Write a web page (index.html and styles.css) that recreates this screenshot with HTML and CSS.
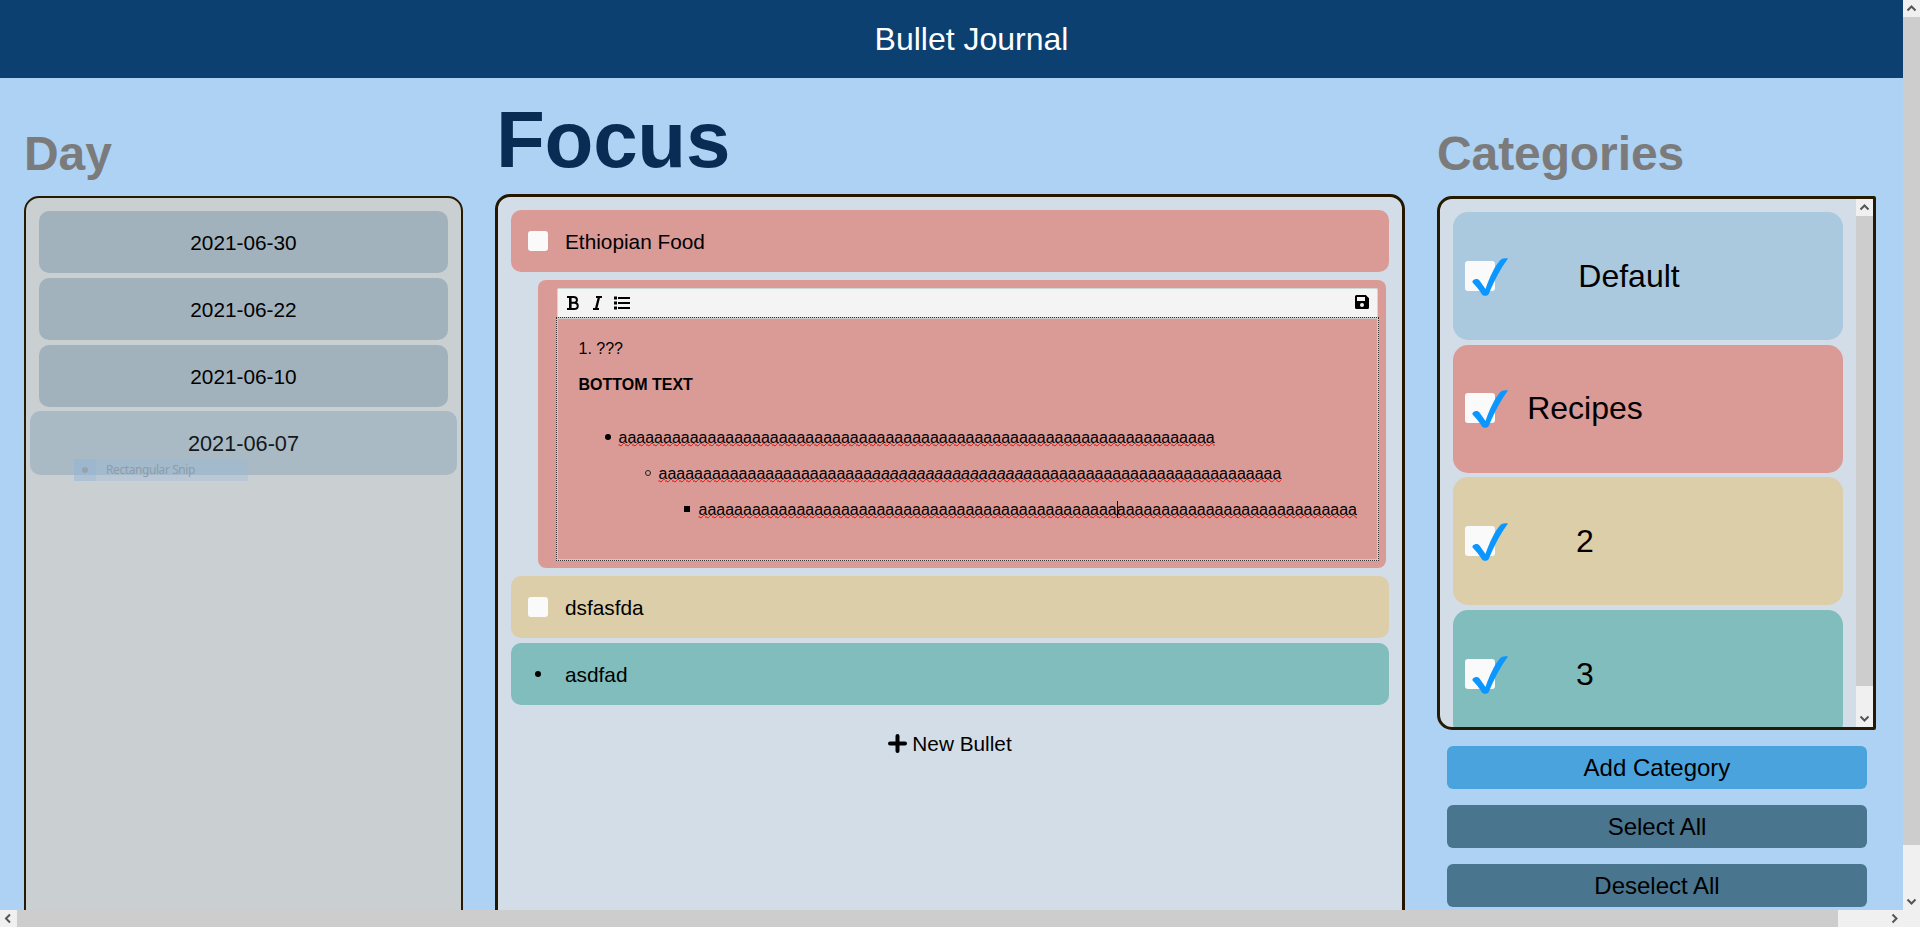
FILE: index.html
```html
<!DOCTYPE html>
<html lang="en">
<head>
<meta charset="utf-8">
<title>Bullet Journal</title>
<link rel="stylesheet" href="styles.css">
</head>
<body>
<div class="window">
  <div class="page">
    <header class="header">Bullet Journal</header>
    <main class="columns">
      <section class="day">
        <h1 class="title">Day</h1>
        <div class="day-panel">
          <div class="date">2021-06-30</div>
          <div class="date">2021-06-22</div>
          <div class="date">2021-06-10</div>
          <div class="date active">2021-06-07</div>
          <div class="snip"><span class="snip-icon"><i></i></span><span class="snip-text">Rectangular Snip</span></div>
        </div>
      </section>
      <section class="focus">
        <h1 class="title focus-title">Focus</h1>
        <div class="focus-panel">
          <div class="bullet red"><span class="mark"><i class="box"></i></span>Ethiopian Food</div>
          <div class="note red">
            <div class="toolbar">
              <svg class="tool-b" width="12" height="14" viewBox="0 0 12 14"><path fill="none" stroke="#000" stroke-width="2" d="M0 1h6.500c4.600 0 4.600 5.800 0 5.800H3.500h3.500c5 0 5 6.200 0 6.200H0"/><path stroke="#000" stroke-width="2.600" d="M3.300 1v12"/></svg>
              <svg class="tool-i" width="9" height="14" viewBox="0 0 9 14"><path fill="none" stroke="#000" stroke-width="1.800" d="M3 1h6M0 13h6"/><path stroke="#000" stroke-width="2.300" d="M6 1L3 13"/></svg>
              <svg class="tool-l" width="16" height="14" viewBox="0 0 16 14"><path d="M0 .5h3v3H0zM0 5.500h3v3H0zM0 10.500h3v3H0zM4 1h12v2H4zM4 6h12v2H4zM4 11h12v2H4z"/></svg>
              <svg class="tool-s" width="14" height="14" viewBox="0 0 14 14"><path fill-rule="evenodd" d="M1.500 0h9.300L14 3.200v9.300a1.500 1.500 0 0 1-1.500 1.500h-11A1.500 1.500 0 0 1 0 12.500v-11A1.500 1.500 0 0 1 1.500 0zM2 2v4h8V2zM7 8a2 2 0 1 0 0 4 2 2 0 0 0 0-4z"/></svg>
            </div>
            <div class="editor">
              <p>1. ???</p>
              <p><b>BOTTOM TEXT</b></p>
              <ul class="l1"><li><span class="typo">aaaaaaaaaaaaaaaaaaaaaaaaaaaaaaaaaaaaaaaaaaaaaaaaaaaaaaaaaaaaaaaaaaa</span>
                <ul class="l2"><li><span class="typo">aaaaaaaaaaaaaaaaaaaaaaaa<em>aaaaaaaaaaaaaaaaaa</em>aaaaaaaaaaaaaaaaaaaaaaaaaaaa</span>
                  <ul class="l3"><li><span class="typo">aaaaaaaaaaaaaaaaaaaaaaaaaaaaaaaaaaaaaaaaaaaaaaa<i class="caret"></i>aaaaaaaaaaaaaaaaaaaaaaaaaaa</span></li></ul>
                </li></ul>
              </li></ul>
            </div>
          </div>
          <div class="bullet yellow"><span class="mark"><i class="box"></i></span>dsfasfda</div>
          <div class="bullet teal"><span class="mark"><i class="dot"></i></span>asdfad</div>
          <div class="new"><svg width="19" height="19" viewBox="0 0 19 19"><path stroke="#000" stroke-width="4" stroke-linecap="round" d="M9.500 2v15M2 9.500h15"/></svg>New Bullet</div>
        </div>
      </section>
      <section class="categories">
        <h1 class="title">Categories</h1>
        <div class="cat-panel">
          <div class="cat-list">
            <div class="cat blue"><span class="check"><svg viewBox="0 0 36 38"><path d="M1 22.500C3 20.500 6 20.500 7.500 22.500L13.500 31C18 18 22.500 9 27.500 3C29.500 .3 32.500 0 36 .5C29 10 22.500 22 17 35.500C16 38.300 11.500 38.500 10 36.500C7.500 32 3.500 28 .8 24.800C.2 24 .3 23.200 1 22.500Z"/></svg></span><span class="cat-name wide">Default</span></div>
            <div class="cat red"><span class="check"><svg viewBox="0 0 36 38"><path d="M1 22.500C3 20.500 6 20.500 7.500 22.500L13.500 31C18 18 22.500 9 27.500 3C29.500 .3 32.500 0 36 .5C29 10 22.500 22 17 35.500C16 38.300 11.500 38.500 10 36.500C7.500 32 3.500 28 .8 24.800C.2 24 .3 23.200 1 22.500Z"/></svg></span><span class="cat-name">Recipes</span></div>
            <div class="cat yellow"><span class="check"><svg viewBox="0 0 36 38"><path d="M1 22.500C3 20.500 6 20.500 7.500 22.500L13.500 31C18 18 22.500 9 27.500 3C29.500 .3 32.500 0 36 .5C29 10 22.500 22 17 35.500C16 38.300 11.500 38.500 10 36.500C7.500 32 3.500 28 .8 24.800C.2 24 .3 23.200 1 22.500Z"/></svg></span><span class="cat-name">2</span></div>
            <div class="cat teal"><span class="check"><svg viewBox="0 0 36 38"><path d="M1 22.500C3 20.500 6 20.500 7.500 22.500L13.500 31C18 18 22.500 9 27.500 3C29.500 .3 32.500 0 36 .5C29 10 22.500 22 17 35.500C16 38.300 11.500 38.500 10 36.500C7.500 32 3.500 28 .8 24.800C.2 24 .3 23.200 1 22.500Z"/></svg></span><span class="cat-name">3</span></div>
          </div>
          <div class="vbar">
            <svg class="arrow" viewBox="0 0 17 17"><path d="M4.500 10.500l4-4 4 4"/></svg>
            <div class="thumb"></div>
            <svg class="arrow" viewBox="0 0 17 17"><path d="M4.500 6.500l4 4 4-4"/></svg>
          </div>
        </div>
        <div class="buttons">
          <div class="button add">Add Category</div>
          <div class="button">Select All</div>
          <div class="button">Deselect All</div>
        </div>
      </section>
    </main>
  </div>
  <div class="vbar page-vbar">
    <svg class="arrow" viewBox="0 0 17 17"><path d="M4.500 10.500l4-4 4 4"/></svg>
    <div class="thumb"></div>
    <svg class="arrow" viewBox="0 0 17 17"><path d="M4.500 6.500l4 4 4-4"/></svg>
  </div>
  <div class="hbar">
    <svg class="arrow" viewBox="0 0 17 17"><path d="M10 4.500l-4 4 4 4"/></svg>
    <div class="thumb"></div>
    <svg class="arrow" viewBox="0 0 17 17"><path d="M6.500 4.500l4 4-4 4"/></svg>
  </div>
</div>
</body>
</html>
```
FILE: styles.css
```css
*, *::before { box-sizing: border-box; }
html, body { margin: 0; overflow: hidden; }
body { font-family: "Liberation Sans", Arial, sans-serif; font-size: 16px; color: #000; }

.window { display: grid; grid-template: 910px 17px / 1903px 17px; width: 1920px; height: 927px; background: #f0f0f0; }
.page { overflow: hidden; background: #aed2f4; display: flex; flex-direction: column; }
.header { flex: none; width: 1943px; height: 78px; line-height: 78px; background: #0b4071; color: #fff; font-size: 32px; text-align: center; }
.columns { flex: 1; min-height: 0; display: grid; grid-template-columns: 439px 910px 439px; column-gap: 32px; padding-left: 24px; }
.day, .focus, .categories { display: flex; flex-direction: column; min-width: 0; min-height: 0; }

.title { flex: none; margin: 0; height: 118px; padding-top: 48px; font-size: 48px; line-height: 55px; letter-spacing: -.1px; color: #7b7b7b; }
.focus-title { height: 116px; padding: 16px 0 0 1px; font-size: 80px; line-height: 92px; letter-spacing: -.3px; color: #082c54; }

.day-panel { flex: none; position: relative; height: 1000px; border: 2px solid #261a00; border-radius: 15px; background: #cacfd1; padding: 13px; display: flex; flex-direction: column; gap: 5px; }
.date { height: 62px; line-height: 64px; border-radius: 10px; background: #a2b2bc; font-size: 20.800px; text-align: center; }
.active { transform: scale(1.044, 1.03); background: #aabac4; color: #14181a; }
.snip { position: absolute; left: 48px; top: 261px; width: 174px; height: 22px; display: flex; align-items: center; background: rgba(150,185,225,.3); font: 12px/20px "Noto Sans", sans-serif; color: #8e9ca8; }
.snip-icon { width: 22px; height: 22px; display: flex; align-items: center; justify-content: center; background: rgba(140,175,215,.25); }
.snip-icon i { width: 6px; height: 6px; border-radius: 50%; background: #97a3ab; }
.snip-text { margin: 0 0 1px 10px; letter-spacing: -.42px; white-space: nowrap; }

.focus-panel { flex: none; height: 1000px; border: 3px solid #261600; border-radius: 15px; background: #d3dde7; padding: 13px; display: flex; flex-direction: column; }
.bullet { flex: none; height: 62px; width: 878px; margin-bottom: 5px; border-radius: 10px; display: flex; align-items: center; line-height: 24px; padding-top: 1px; font-size: 20.800px; }
.mark { width: 54px; display: flex; padding: 0 0 1px 17px; }
.box { width: 20px; height: 20px; border-radius: 3px; background: #fafafa; }
.dot { width: 6px; height: 6px; margin-left: 7px; border-radius: 50%; background: #000; }
.red { background: #da9a96; }
.yellow { background: #dccea8; }
.teal { background: #80bdbc; }
.blue { background: #abc9de; }

.note { flex: none; width: 848px; height: 288px; margin: 3px 0 8px 27px; border-radius: 8px; padding: 8px 7px 7px 18px; }
.toolbar { height: 29px; margin: 0 1px; background: #f4f4f4; border: 1px solid #cfd8d4; border-bottom: 0; border-radius: 2px 2px 0 0; display: flex; align-items: flex-start; padding: 7px 8px 0 9px; }
.tool-i { margin-left: 14px; }
.tool-l { margin-left: 12px; }
.tool-s { margin-left: auto; margin-top: -1px; }
.editor { height: 244px; outline: 1px dotted #333; outline-offset: -1px; border: 2px solid #d0ccca; border-left-color: #d3c3c1; padding: 21px 20px 20px 20.500px; line-height: 18px; }
.editor p { margin: 0 0 18px; }
.editor ul { margin: 0; padding-left: 40px; list-style: none; }
.editor ul ul { margin-top: 18px; }
.editor .l1 { margin-top: 35px; }
.editor li::before { content: ""; display: inline-block; width: 6px; height: 6px; margin: 0 8px 0 -14px; vertical-align: 3px; }
.l1 > li::before { border-radius: 50%; background: #000; }
.editor .l2 > li::before { border: 1px solid #222; border-radius: 50%; background: none; }
.editor .l3 > li::before { margin: 0 9px 0 -15px; border-radius: 0; background: #000; }
.typo { text-decoration: underline wavy red 1px; text-decoration-skip-ink: none; text-underline-offset: -1px; white-space: nowrap; }
.caret { display: inline-block; width: 1px; height: 17px; margin-right: -1px; background: #000; vertical-align: -3px; }
.new { display: flex; align-items: center; justify-content: center; gap: 5px; margin-top: 22px; height: 24px; font-size: 20.800px; }
.new svg { margin-bottom: 1px; }

.cat-panel { flex: none; height: 534px; border: 3px solid #261a00; border-radius: 15px 2px 2px 15px; background: #d3dde7; display: flex; overflow: hidden; }
.cat-list { flex: 1; padding: 13px; display: flex; flex-direction: column; gap: 4.700px; }
.cat { flex: none; height: 128px; border-radius: 15px; display: flex; align-items: center; font-size: 32px; }
.check { position: relative; width: 30px; height: 30px; margin: 0 0 1px 12px; border-radius: 3px; background: #fafafa; }
.check svg { position: absolute; left: 7px; top: -3px; width: 36px; height: 38px; fill: #0b97ff; }
.cat-name { width: 180px; text-align: center; }
.wide { margin-left: 44px; }

.buttons { display: flex; flex-direction: column; gap: 16px; padding: 16px 9px 0 10px; }
.button { height: 43px; line-height: 43px; border-radius: 6px; background: #49758f; font-size: 24px; text-align: center; }
.add { background: #4ba3dd; }

.vbar { width: 17px; background: #f0f0f0; display: flex; flex-direction: column; }
.vbar .thumb { height: 470px; margin-bottom: auto; background: #cdcdcd; }
.page-vbar .thumb { height: 828px; }
.arrow { flex: none; width: 17px; height: 17px; fill: none; stroke: #555; stroke-width: 2; }
.hbar { grid-column: 1 / 2; display: flex; }
.hbar .thumb { width: 1821px; margin-right: auto; background: #cdcdcd; }
```
